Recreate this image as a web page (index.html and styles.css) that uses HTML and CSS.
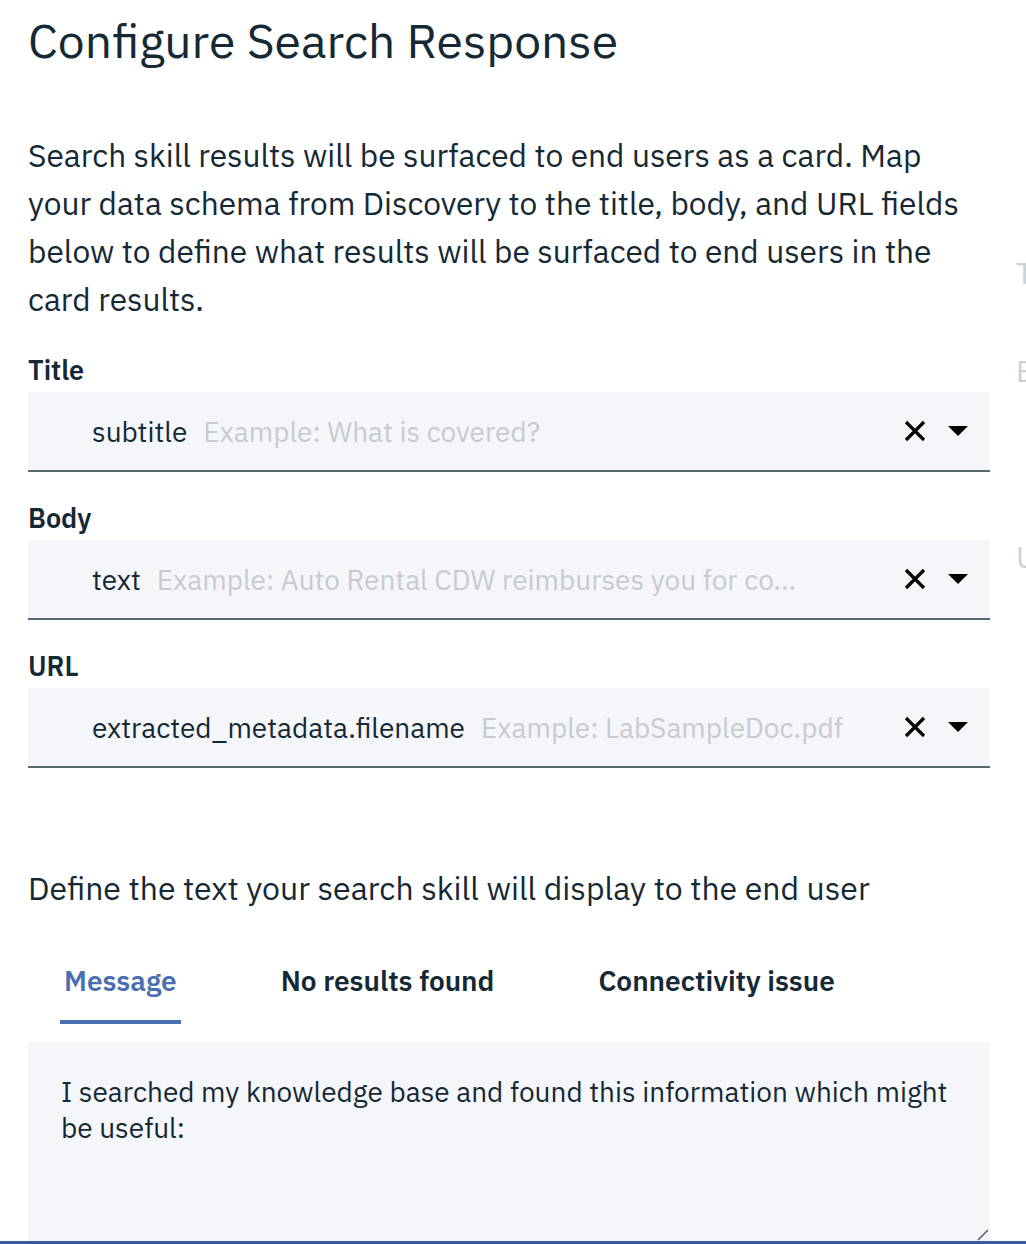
FILE: index.html
```html
<!DOCTYPE html>
<html>
<head>
<meta charset="utf-8">
<link rel="stylesheet" href="styles.css">
</head>
<body>
<div class="frame">
  <main class="main">
    <h1 class="heading">Configure Search Response</h1>
    <p class="intro">Search skill results will be surfaced to end users as a card. Map your data schema from Discovery to the title, body, and URL fields below to define what results will be surfaced to end users in the card results.</p>

    <div class="field first">
      <div class="label">Title</div>
      <div class="select">
        <span class="value">subtitle</span>
        <span class="placeholder">Example: What is covered?</span>
        <span class="icons">
          <svg class="x" width="22" height="22" viewBox="0 0 22 22"><path d="M2 2L20 20M20 2L2 20" stroke="#000" stroke-width="3.2" fill="none"/></svg>
          <svg class="caret" width="20" height="11" viewBox="0 0 20 11"><path d="M0 0H20L10 10Z" fill="#000"/></svg>
        </span>
      </div>
    </div>

    <div class="field">
      <div class="label">Body</div>
      <div class="select">
        <span class="value">text</span>
        <span class="placeholder">Example: Auto Rental CDW reimburses you for co...</span>
        <span class="icons">
          <svg class="x" width="22" height="22" viewBox="0 0 22 22"><path d="M2 2L20 20M20 2L2 20" stroke="#000" stroke-width="3.2" fill="none"/></svg>
          <svg class="caret" width="20" height="11" viewBox="0 0 20 11"><path d="M0 0H20L10 10Z" fill="#000"/></svg>
        </span>
      </div>
    </div>

    <div class="field">
      <div class="label">URL</div>
      <div class="select">
        <span class="value">extracted_metadata.filename</span>
        <span class="placeholder">Example: LabSampleDoc.pdf</span>
        <span class="icons">
          <svg class="x" width="22" height="22" viewBox="0 0 22 22"><path d="M2 2L20 20M20 2L2 20" stroke="#000" stroke-width="3.2" fill="none"/></svg>
          <svg class="caret" width="20" height="11" viewBox="0 0 20 11"><path d="M0 0H20L10 10Z" fill="#000"/></svg>
        </span>
      </div>
    </div>

    <p class="define">Define the text your search skill will display to the end user</p>

    <div class="tabs">
      <div class="tab active">Message</div>
      <div class="tab">No results found</div>
      <div class="tab">Connectivity issue</div>
    </div>

    <div class="textarea">
      <p class="message">I searched my knowledge base and found this information which might be useful:</p>
      <svg class="grip" width="12" height="12" viewBox="0 0 12 12"><path d="M1 11L11 1" stroke="#5a6068" stroke-width="1.6"/></svg>
    </div>
  </main>
  <aside class="side">
    <div class="side-t">T</div>
    <div class="side-e">E</div>
    <div class="side-u">U</div>
  </aside>
</div>
</body>
</html>
```

FILE: styles.css
```css
html, body {
  margin: 0;
  padding: 0;
}
body {
  width: 1026px;
  height: 1244px;
  overflow: hidden;
  background: #fff;
  font-family: "IBM Plex Sans", "Noto Sans", "Open Sans", sans-serif;
  color: #152935;
}
.frame {
  display: flex;
  height: 1241px;
  border-bottom: 3px solid #3b5a9a;
  overflow: hidden;
}
.main {
  flex: 0 0 962px;
  min-width: 0;
  width: 962px;
  margin-left: 28px;
}
.heading {
  margin: 8px 0 0;
  font-size: 48px;
  font-weight: 400;
  line-height: 64px;
  letter-spacing: 0;
}
.intro {
  margin: 60px 0 0;
  width: 955px;
  font-size: 31.7px;
  line-height: 48px;
}
.label {
  font-size: 27px;
  font-weight: 600;
  line-height: 40px;
  margin-top: 26px;
  margin-bottom: 2px;
}
.select {
  height: 78px;
  background: #f4f6fa;
  border-bottom: 2px solid #5a6872;
  display: flex;
  align-items: center;
  padding-left: 64px;
  padding-right: 22px;
  font-size: 28px;
}
.value {
  color: #152935;
}
.placeholder {
  color: #c7cbd1;
  margin-left: 16px;
  flex: 1;
  white-space: nowrap;
}
.icons {
  display: flex;
  align-items: center;
  gap: 22px;
}
.define {
  margin: 98px 0 0;
  font-size: 32px;
  line-height: 44px;
}
.tabs {
  display: flex;
  margin-top: 45px;
  padding-left: 32px;
  gap: 96px;
}
.tab {
  font-size: 28px;
  font-weight: 600;
  line-height: 40px;
  padding: 6px 4px 19px;
  color: #152935;
}
.tab.active {
  color: #4a6fb0;
  border-bottom: 4px solid #4a6fb0;
}
.textarea {
  position: relative;
  margin-top: 18px;
  height: 200px;
  background: #f4f6fa;
  padding: 32px 20px 32px 33px;
  box-sizing: border-box;
}
.message {
  margin: 0;
  font-size: 28px;
  line-height: 36px;
}
.grip {
  position: absolute;
  right: 1px;
  bottom: 1px;
}
.side {
  flex: 0 0 auto;
  margin-left: 26px;
  color: #cdd0d3;
  font-size: 30px;
  line-height: 40px;
}
.side-t { margin-top: 253px; }
.side-e { margin-top: 58px; }
.side-u { margin-top: 146px; }
```
